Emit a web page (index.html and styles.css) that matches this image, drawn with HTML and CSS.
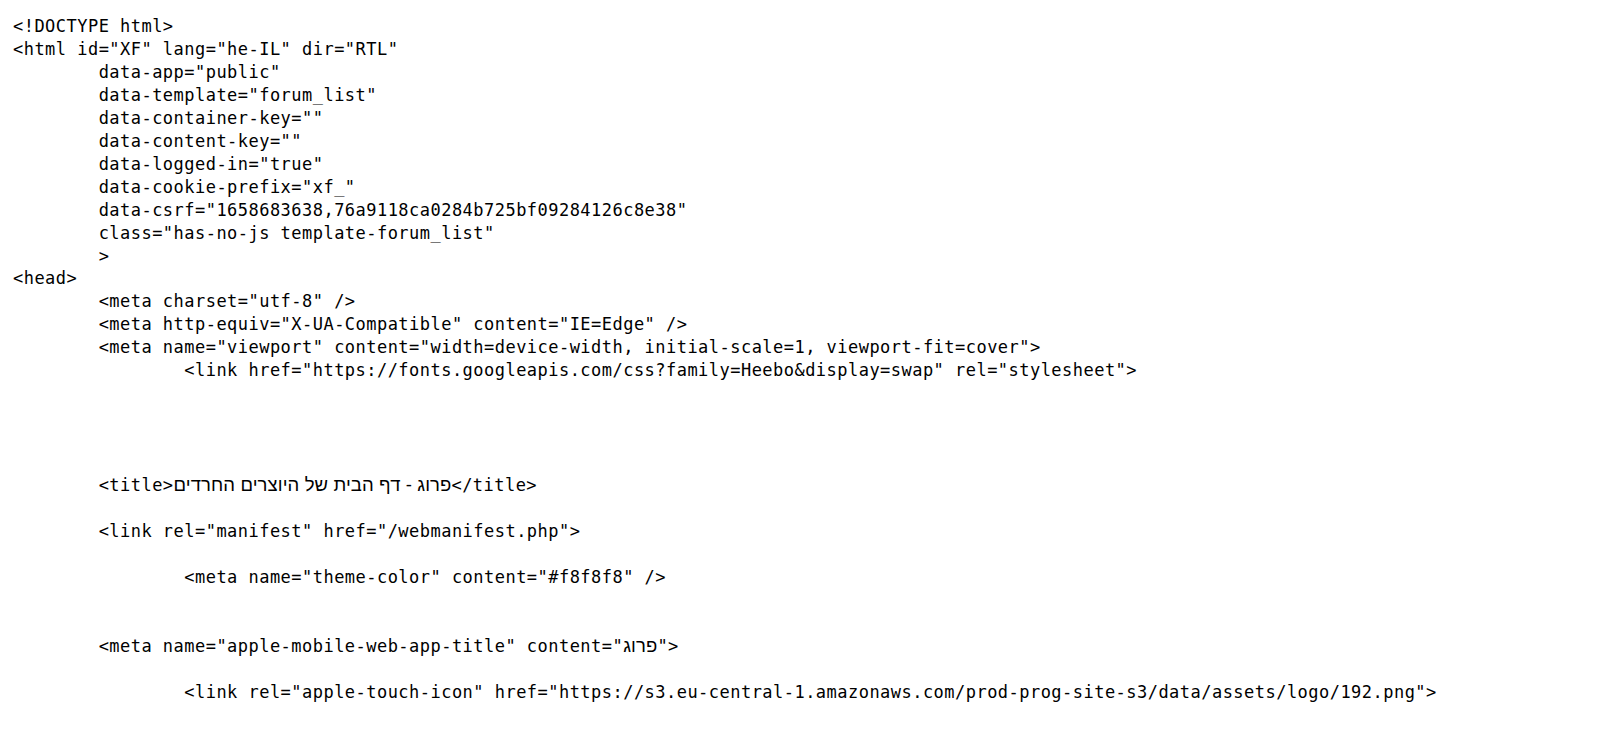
FILE: index.html
```
<!DOCTYPE html>
<html lang="en">
<head>
<meta charset="utf-8">
<title>view-source</title>
<link rel="stylesheet" href="styles.css">
</head>
<body class="page">
<pre class="source">&lt;!DOCTYPE html&gt;
&lt;html id="XF" lang="he-IL" dir="RTL"
        data-app="public"
        data-template="forum_list"
        data-container-key=""
        data-content-key=""
        data-logged-in="true"
        data-cookie-prefix="xf_"
        data-csrf="1658683638,76a9118ca0284b725bf09284126c8e38"
        class="has-no-js template-forum_list"
        &gt;
&lt;head&gt;
        &lt;meta charset="utf-8" /&gt;
        &lt;meta http-equiv="X-UA-Compatible" content="IE=Edge" /&gt;
        &lt;meta name="viewport" content="width=device-width, initial-scale=1, viewport-fit=cover"&gt;
                &lt;link href="https://fonts.googleapis.com/css?family=Heebo&amp;display=swap" rel="stylesheet"&gt;




        &lt;title&gt;<span class="he">פרוג - דף הבית של היוצרים החרדים</span>&lt;/title&gt;

        &lt;link rel="manifest" href="/webmanifest.php"&gt;

                &lt;meta name="theme-color" content="#f8f8f8" /&gt;


        &lt;meta name="apple-mobile-web-app-title" content="<span class="he">פרוג</span>"&gt;

                &lt;link rel="apple-touch-icon" href="https://s3.eu-central-1.amazonaws.com/prod-prog-site-s3/data/assets/logo/192.png"&gt;
</pre>
</body>
</html>
```
FILE: styles.css
```
html, body {
  background: #ffffff;
}
.page {
  margin: 15px 0 0 13px;
}
.source {
  margin: 0;
  font-family: "DejaVu Sans Mono", "Liberation Mono", monospace;
  font-size: 17px;
  letter-spacing: 0.47px;
  line-height: 22.95px;
  color: #000000;
  white-space: pre;
  direction: ltr;
  unicode-bidi: isolate;
}
.he {
  font-family: "Liberation Sans", "DejaVu Sans", sans-serif;
  font-size: 18.5px;
  letter-spacing: 0.1px;
}
```
